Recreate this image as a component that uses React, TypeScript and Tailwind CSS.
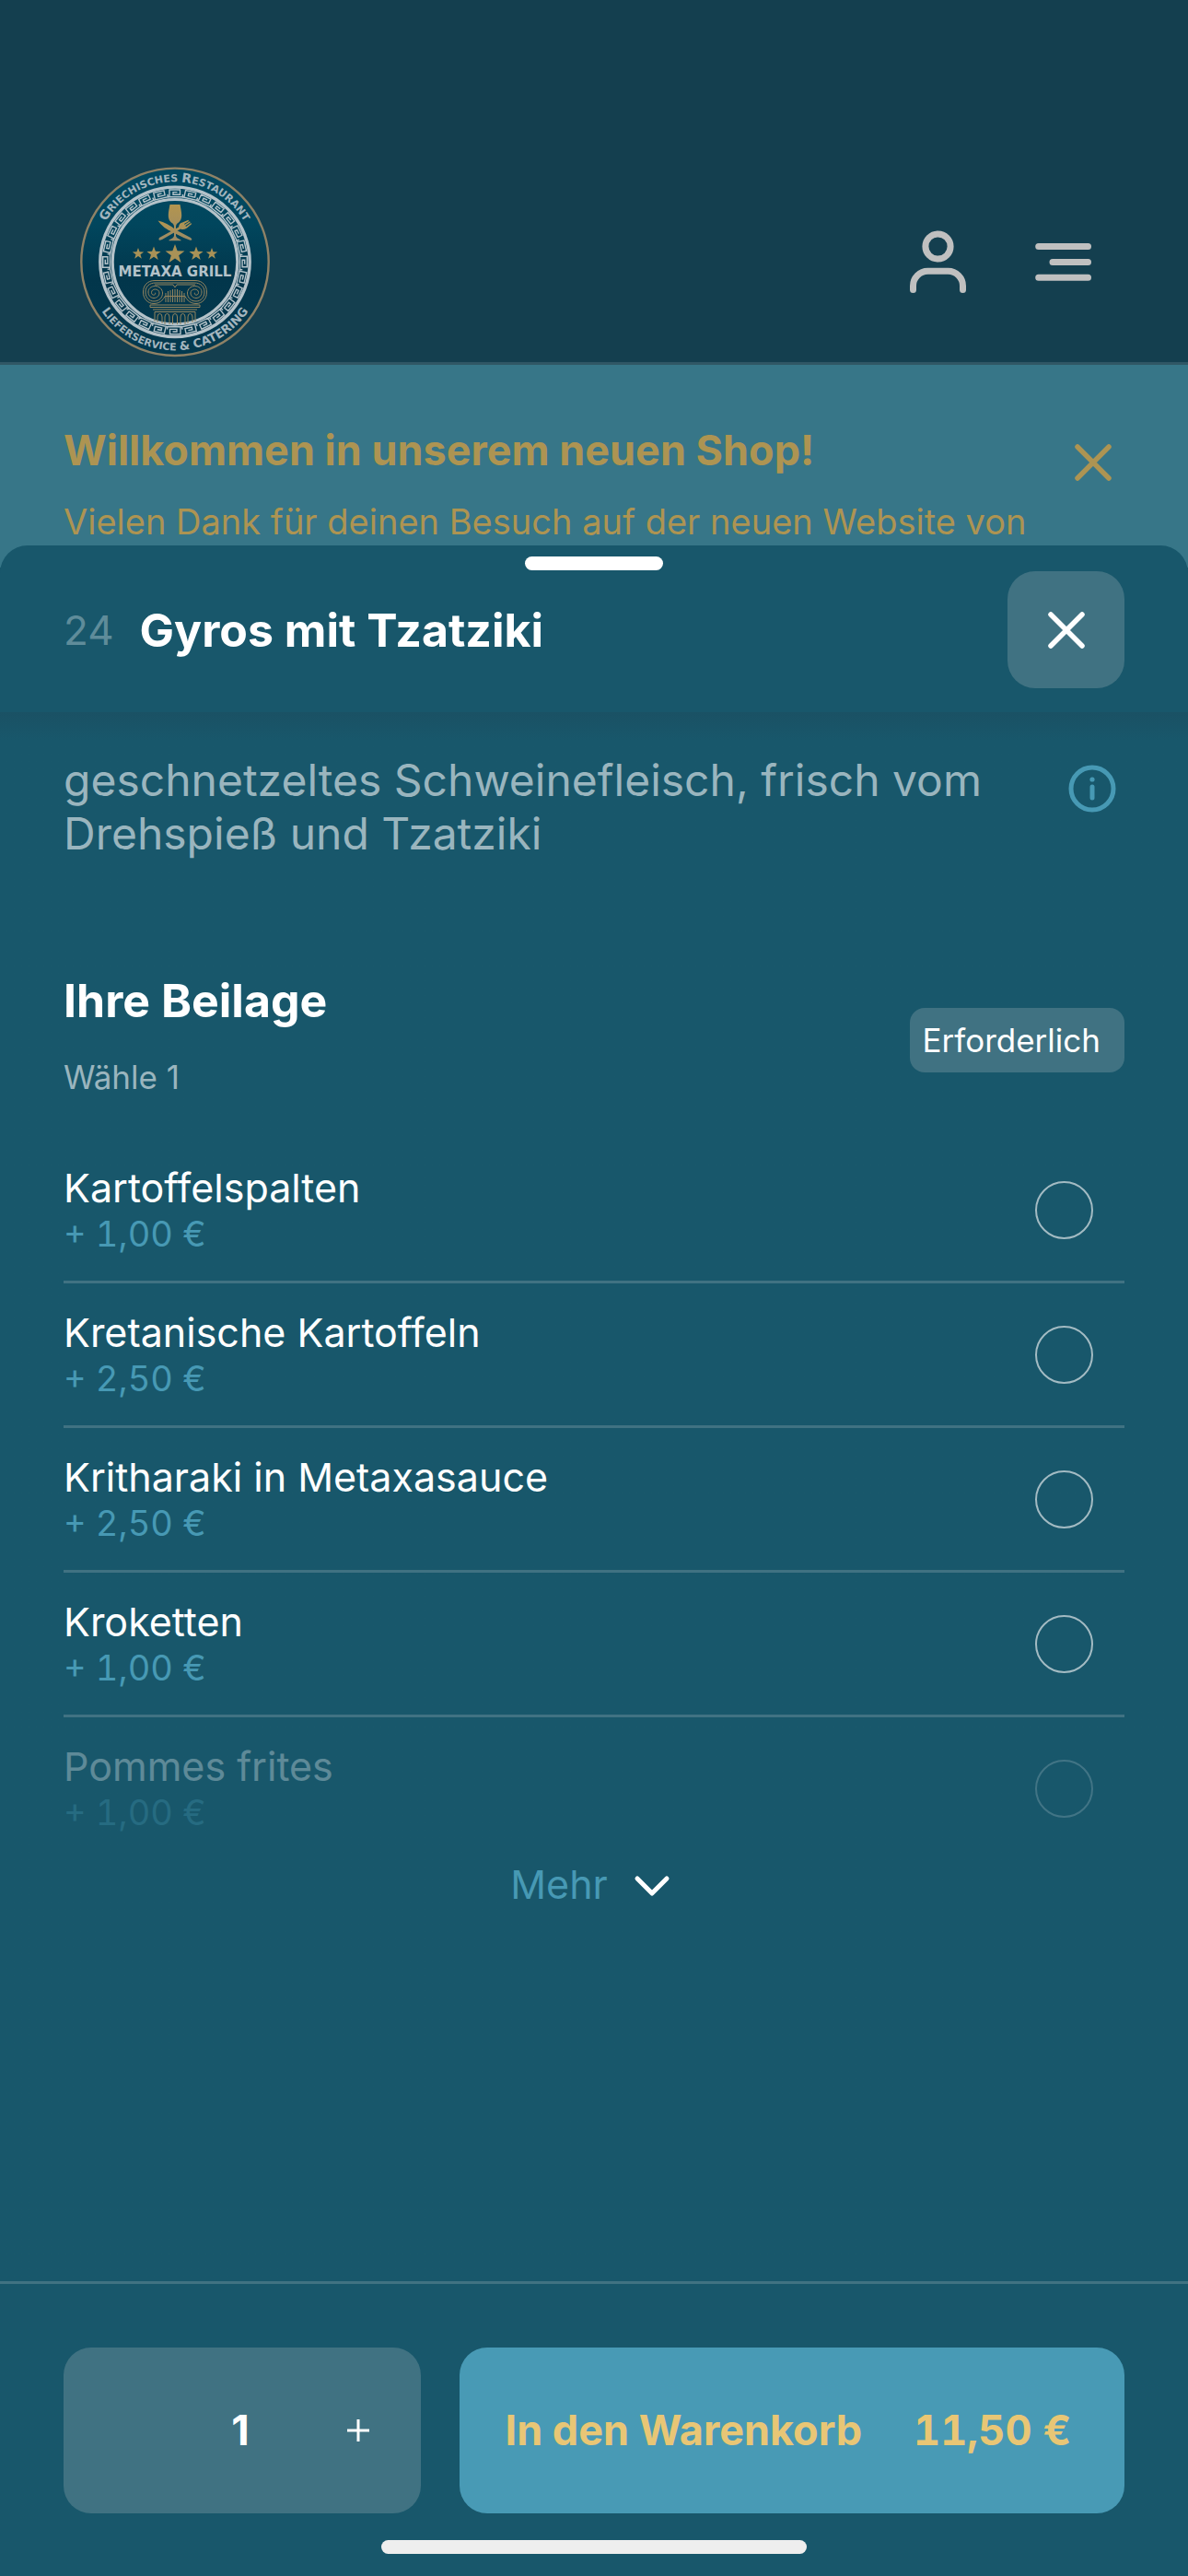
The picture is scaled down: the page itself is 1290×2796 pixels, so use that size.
import { useState } from "react";

interface SideDish {
  id: string;
  name: string;
  price: string;
  faded?: boolean;
}

const sideDishes: SideDish[] = [
  { id: "kartoffelspalten", name: "Kartoffelspalten", price: "+ 1,00 €" },
  { id: "kretanische", name: "Kretanische Kartoffeln", price: "+ 2,50 €" },
  { id: "kritharaki", name: "Kritharaki in Metaxasauce", price: "+ 2,50 €" },
  { id: "kroketten", name: "Kroketten", price: "+ 1,00 €" },
  { id: "pommes", name: "Pommes frites", price: "+ 1,00 €", faded: true },
];

const meander = Array.from({ length: 28 }, (_, i) => (i * 360) / 28);

const stars = [
  { x: 80, y: 110.5, size: 6.5 },
  { x: 97, y: 110.5, size: 8 },
  { x: 120, y: 111, size: 11 },
  { x: 143, y: 110.5, size: 8 },
  { x: 160, y: 110.5, size: 6.5 },
];

function Logo() {
  return (
    <svg viewBox="12 11 216 216" className="size-[216px]" role="img" aria-label="Metaxa Grill">
      <defs>
        <linearGradient id="plate" x1="0" y1="0" x2="0" y2="1">
          <stop offset="0" stopColor="#024a62" />
          <stop offset="0.3" stopColor="#01465d" />
          <stop offset="0.6" stopColor="#02364b" />
          <stop offset="1" stopColor="#043a4f" />
        </linearGradient>
        <linearGradient id="gold" x1="0" y1="0" x2="0" y2="1">
          <stop offset="0" stopColor="#b3954f" />
          <stop offset="1" stopColor="#9b8a66" />
        </linearGradient>
        <path id="arcTop" d="M33 119.3 A87 87 0 0 1 207 119.3" />
        <path id="arcBottom" d="M24 119.3 A96 96 0 0 0 216 119.3" />
      </defs>
      <circle cx="120" cy="119.3" r="101.7" fill="url(#plate)" stroke="#8f8266" strokeWidth="2.4" />

      <g fill="#a3b5be" fontFamily="'DejaVu Sans', sans-serif" fontWeight="700" textAnchor="middle">
        <text fontSize="11">
          <textPath href="#arcTop" startOffset="50%">
            <tspan fontSize="14">G</tspan>RIECHISCHES <tspan fontSize="14">R</tspan>ESTAURANT
          </textPath>
        </text>
        <text fontSize="11">
          <textPath href="#arcBottom" startOffset="50%">
            <tspan fontSize="13">L</tspan>IEFERSERVICE <tspan fontSize="13">&amp; CATERING</tspan>
          </textPath>
        </text>
      </g>

      {/* greek key ring */}
      <circle cx="120" cy="119.3" r="81.2" fill="none" stroke="#b4c2c9" strokeWidth="3.4" />
      <circle cx="120" cy="119.3" r="67.8" fill="none" stroke="#b4c2c9" strokeWidth="3.2" />
      <g fill="none" stroke="#b4c2c9" strokeWidth="1.4">
        {meander.map((angle) => (
          <path
            key={angle}
            d="M112 48.8 H114 V41 H125.5 V46.2 H118 V43.6 H122.5 M114 48.8 H128.4 V46"
            transform={`rotate(${angle} 120 119.3)`}
          />
        ))}
      </g>

      {/* glass, knife and fork */}
      <g fill="url(#gold)">
        <path d="M114.5 57 H125.5 C127 65 129.5 74 122.5 77.5 Q121 78.5 121 81 V91 Q121 93 126.5 95.5 V96.3 H113.5 V95.5 Q119 93 119 91 V81 Q119 78.5 117.5 77.5 C110.5 74 113 65 114.5 57Z" />
        <path d="M101.6 74.5 Q112 77 121 84.5 L137 93 Q140 96 136.5 95.8 Q126 92 118 87 Q107 83 101.6 74.5Z" />
        <path d="M103 93 L124 81.5 Q124.5 77 128 76.5 L134.5 73.8 L135 75 L130 78 L130.5 78.8 L136 75.3 L136.7 76.4 L131.3 80 L132 80.9 L137.5 77 L138 78.3 L133 82.5 Q129 85 126 83.5 L106 95 Q101 97 103 93Z" />
      </g>

      <g fill="#a99257">
        {stars.map((star) => (
          <path
            key={star.x}
            d="M0 -1 L.24 -.33 L.95 -.31 L.38 .12 L.59 .81 L0 .4 L-.59 .81 L-.38 .12 L-.95 -.31 L-.24 -.33Z"
            transform={`translate(${star.x} ${star.y}) scale(${star.size})`}
          />
        ))}
      </g>

      <text
        x="120"
        y="135"
        fill="#b4c2c9"
        fontFamily="'DejaVu Sans', sans-serif"
        fontSize="15"
        fontWeight="700"
        textAnchor="middle"
      >
        METAXA GRILL
      </text>

      {/* ionic capital */}
      <g fill="none" stroke="#93845f" strokeWidth="1">
        <path d="M98 139.5 H142 C150 139.5 154.5 145 154.5 152 C154.5 160 149 164.5 143 164.5 C137 164.5 133 161 131 156.5 H109 C107 161 103 164.5 97 164.5 C91 164.5 85.5 160 85.5 152 C85.5 145 90 139.5 98 139.5Z" />
        <path d="M99 142 H141 C148 142 152 146 152 152 C152 158 148 162 143 162 C137 162 133.5 158 133.5 153 C133.5 149 137 145.5 141.5 145.5 C146 145.5 149 148.5 149 152 C149 156 146 158.5 143 158.5 C139.5 158.5 137 156 137 153 C137 150.5 139 149 141.5 149 C144 149 145.5 150.5 145.5 152.5 C145.5 154.5 144 155.5 142.5 155 C141 154.5 141 153 142 152.5" />
        <path d="M99 142 C92 142 88 146 88 152 C88 158 92 162 97 162 C103 162 106.5 158 106.5 153 C106.5 149 103 145.5 98.5 145.5 C94 145.5 91 148.5 91 152 C91 156 94 158.5 97 158.5 C100.5 158.5 103 156 103 153 C103 150.5 101 149 98.5 149 C96 149 94.5 150.5 94.5 152.5 C94.5 154.5 96 155.5 97.5 155 C99 154.5 99 153 98 152.5" />
        <path d="M98 144 H118 L120 147 L122 144 H142 M110 163 V153 M112.5 163 V151 M115 163 V150 M117.5 163 V149 M120 163 V149 M122.5 163 V149 M125 163 V150 M127.5 163 V151 M130 163 V153" />
        <path d="M93 166 H147 V168.5 H93Z M96 171 H144 M98 173.5 H142 M98 173.5 V184 M142 173.5 V184" />
        <path d="M101 185 V179 Q101 175.5 103.5 175.5 T106 179 V186 M109 187 V179 Q109 175.5 111.5 175.5 T114 179 V187 M117.5 187 V179 Q117.5 175.5 120 175.5 T122.5 179 V187 M126 187 V179 Q126 175.5 128.5 175.5 T131 179 V187 M134 186 V179 Q134 175.5 136.5 175.5 T139 179 V185" />
      </g>
    </svg>
  );
}

function CrossIcon() {
  return (
    <svg viewBox="0 0 48 48" className="size-12" fill="none" stroke="currentColor" strokeWidth="5.5" strokeLinecap="round">
      <path d="M7 7 L41 41 M41 7 L7 41" />
    </svg>
  );
}

function SiteHeader() {
  return (
    <header className="flex items-center justify-between border-b-[3px] border-[#305765] bg-[#143f4f] pt-[176px] pr-[100px] pb-px pl-[82px] text-[#c0c0c0]">
      <a href="#" aria-label="Metaxa Grill">
        <Logo />
      </a>
      <nav className="flex gap-16">
        <button type="button" aria-label="Konto">
          <svg viewBox="0 0 72 72" className="size-[72px]" fill="none" stroke="currentColor" strokeWidth="7" strokeLinecap="round">
            <circle cx="36.5" cy="19.5" r="13.6" />
            <path d="M9.5 66.5 V62.3 A16 16 0 0 1 25.5 46.3 H47.5 A16 16 0 0 1 63.5 62.3 V66.5" />
          </svg>
        </button>
        <button type="button" aria-label="Menü">
          <svg viewBox="0 0 72 72" className="size-[72px]" fill="none" stroke="currentColor" strokeWidth="7" strokeLinecap="round">
            <path d="M9.7 19.6 H63.5 M25 36.5 H63.5 M9.7 53.3 H63.5" />
          </svg>
        </button>
      </nav>
    </header>
  );
}

function WelcomeBanner() {
  return (
    <section className="flex items-start justify-between bg-[#377688] pt-[66px] pr-[79px] pb-[25px] pl-[69px] text-[#ad9452]">
      <div>
        <h2 className="text-[45px] leading-[54px] font-bold">Willkommen in unserem neuen Shop!</h2>
        <p className="mt-[25px] text-[38px] leading-[50px]">
          Vielen Dank für deinen Besuch auf der neuen Website von
        </p>
      </div>
      <button type="button" aria-label="Hinweis schließen" className="mt-4">
        <CrossIcon />
      </button>
    </section>
  );
}

function SideDishRow({ dish }: { dish: SideDish }) {
  return (
    <li className="border-b-[3px] border-[#407282] last:border-b-0">
      <label
        htmlFor={dish.id}
        className={`flex items-center justify-between py-[27px] pr-[34px] ${dish.faded ? "opacity-30" : ""}`}
      >
        <span className="flex flex-col">
          <span className="text-[43px] leading-[52px] text-white">{dish.name}</span>
          <span className="text-[38px] leading-[48px] text-[#4799b4] tabular-nums">{dish.price}</span>
        </span>
        <input
          type="radio"
          id={dish.id}
          name="beilage"
          className="size-[63px] appearance-none rounded-full border-2 border-[#a3bbc3] checked:bg-[#4799b4]"
        />
      </label>
    </li>
  );
}

function ProductSheet() {
  const [quantity, setQuantity] = useState("1");

  return (
    <main
      role="dialog"
      aria-labelledby="product-title"
      className="relative -mt-6 flex flex-1 flex-col rounded-t-[30px] bg-[#18576b] text-white"
    >
      <div className="absolute top-3 left-1/2 h-[15px] w-[150px] -translate-x-1/2 rounded-full bg-white" />

      <div className="flex items-center justify-between px-[69px] pt-7 pb-[26px]">
        <div className="flex items-center gap-7">
          <span className="text-[44px] leading-[60px] text-[#5f8c9a]">24</span>
          <h1 id="product-title" className="text-[50px] leading-[60px] font-bold">
            Gyros mit Tzatziki
          </h1>
        </div>
        <button
          type="button"
          aria-label="Schließen"
          className="flex size-[127px] items-center justify-center rounded-[30px] bg-[#407282]"
        >
          <CrossIcon />
        </button>
      </div>

      <div className="flex-1 bg-linear-to-b from-[#1a5164] to-[#18576b] to-[30px] px-[69px] pt-[45px]">
        <div className="flex items-start justify-between pr-2">
          <p className="max-w-[1020px] text-[48px] leading-[58px] text-[#9ab5be]">
            geschnetzeltes Schweinefleisch, frisch vom Drehspieß und Tzatziki
          </p>
          <button type="button" aria-label="Informationen" className="mt-[11px] text-[#4799b4]">
            <svg viewBox="0 0 54 54" className="size-[54px]" fill="none" stroke="currentColor" strokeWidth="5" strokeLinecap="round">
              <circle cx="27" cy="27" r="23" />
              <path d="M27 25 V37" />
              <circle cx="27" cy="17" r="2.6" fill="currentColor" stroke="none" />
            </svg>
          </button>
        </div>

        <div className="mt-[122px] flex items-center justify-between">
          <div>
            <h2 className="text-[50px] leading-[60px] font-bold">Ihre Beilage</h2>
            <p className="mt-8 text-[35px] leading-[42px] text-[#9ab5be]">Wähle 1</p>
          </div>
          <span className="mt-3 rounded-2xl bg-[#407282] py-[14px] pr-[26px] pl-[14px] text-[35px] leading-[42px]">
            Erforderlich
          </span>
        </div>

        <ul className="mt-[46px]">
          {sideDishes.map((dish) => (
            <SideDishRow key={dish.id} dish={dish} />
          ))}
        </ul>

        <button type="button" className="mx-auto flex items-center gap-6 pr-1 text-[43px] leading-[54px] text-[#4799b4]">
          Mehr
          <svg viewBox="0 0 48 48" className="size-12" fill="none" stroke="#fff" strokeWidth="5" strokeLinecap="round" strokeLinejoin="round">
            <path d="M8 18 L24 34 L40 18" />
          </svg>
        </button>
      </div>

      <footer className="relative flex gap-[42px] border-t-[3px] border-[#407282] px-[69px] pt-[69px] pb-[68px]">
        <div className="grid h-[180px] w-[388px] shrink-0 grid-cols-3 rounded-[30px] bg-[#407282] pr-1">
          <button type="button" aria-label="Weniger" disabled />
          <input
            aria-label="Anzahl"
            inputMode="numeric"
            value={quantity}
            onChange={(e) => setQuantity(e.target.value)}
            className="w-full bg-transparent text-center text-[45px] font-bold"
          />
          <button
            type="button"
            aria-label="Mehr davon"
            onClick={() => setQuantity(String(Number(quantity) + 1))}
            className="flex items-center justify-center"
          >
            <svg viewBox="0 0 24 24" className="size-6" stroke="currentColor" strokeWidth="3">
              <path d="M12 0 V24 M0 12 H24" />
            </svg>
          </button>
        </div>
        <button
          type="button"
          className="flex h-[180px] flex-1 items-center justify-center gap-14 rounded-[30px] bg-[#489ab5] pr-2 text-[45px] font-bold text-[#e8c675]"
        >
          <span>In den Warenkorb</span>
          <span className="tabular-nums">11,50 €</span>
        </button>
        <div className="absolute bottom-6 left-1/2 h-[15px] w-[462px] -translate-x-1/2 rounded-full bg-[#eeeeee]" />
      </footer>
    </main>
  );
}

export default function App() {
  return (
    <div className="flex min-h-screen flex-col bg-[#18576b] font-['Inter',sans-serif]">
      <SiteHeader />
      <WelcomeBanner />
      <ProductSheet />
    </div>
  );
}
